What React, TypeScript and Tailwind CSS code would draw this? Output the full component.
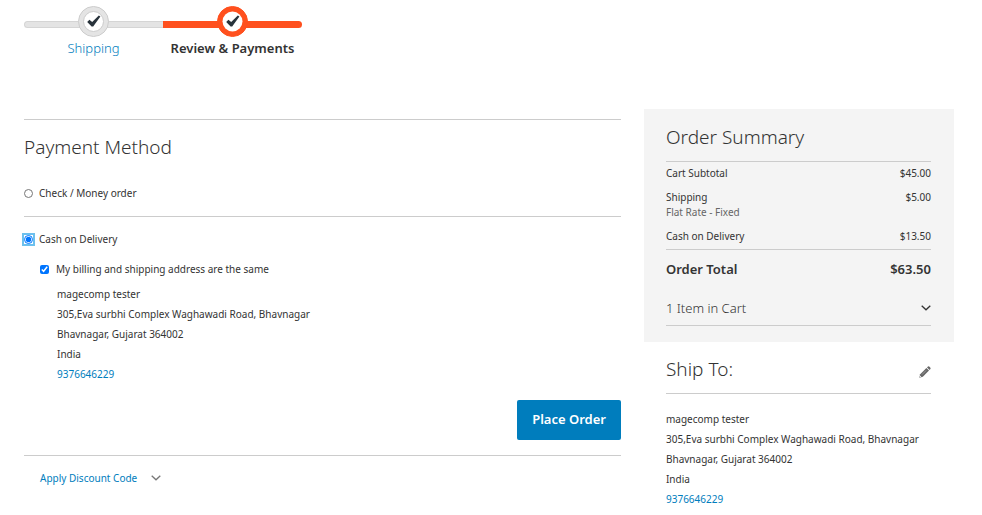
import { useState } from "react";

interface StepProps {
    label: string;
    active?: boolean;
}

interface AddressProps {
    className?: string;
}

const steps: StepProps[] = [
    { label: "Shipping" },
    { label: "Review & Payments", active: true },
];

const addressLines = [
    "magecomp tester",
    "305,Eva surbhi Complex Waghawadi Road, Bhavnagar",
    "Bhavnagar, Gujarat 364002",
    "India",
];

function ChevronIcon({ className }: { className: string }) {
    return (
        <svg viewBox="0 0 10 6" className={className} fill="none" stroke="currentColor" strokeWidth="1.3" aria-hidden="true">
            <path d="M0.7 0.7 L5 4.8 L9.3 0.7" />
        </svg>
    );
}

function Step({ label, active }: StepProps) {
    return (
        <li className="flex w-[139px] flex-col items-center">
            <div className="grid w-full justify-items-center">
                <div
                    className={
                        active
                            ? "col-start-1 row-start-1 mt-[15px] h-[7px] w-full rounded-r-md bg-[#ff501e]"
                            : "col-start-1 row-start-1 mt-[15px] h-[7px] w-full rounded-l-md border border-r-0 border-[#d5d5d5] bg-[#e4e4e4]"
                    }
                />
                <svg viewBox="0 0 31 31" className="col-start-1 row-start-1 size-[31px]" aria-hidden="true">
                    <circle cx="15.5" cy="15.5" r="15" fill={active ? "#ff501e" : "#e4e4e4"} stroke={active ? "#ff501e" : "#ccc"} />
                    <circle cx="15.5" cy="15.5" r="10" fill="#fff" stroke={active ? "#fff" : "#ccc"} strokeWidth={active ? 0 : 1} />
                    <path d="M9.2 15.9 L11.4 13.7 L14.2 15.9 L20.8 9.4 L22.4 10.4 L15.2 20.6 L13.6 20.6 Z" fill="#28333b" />
                </svg>
            </div>
            {active ? (
                <span className="mt-px text-[13px] leading-5 font-semibold text-[#333]">{label}</span>
            ) : (
                <a href="#shipping" className="mt-px text-[13px] leading-5 font-light text-[#007dbd]">{label}</a>
            )}
        </li>
    );
}

function Address({ className }: AddressProps) {
    return (
        <address className={`leading-5 not-italic ${className}`}>
            {addressLines.map((line) => (
                <div key={line}>{line}</div>
            ))}
            <a href="tel:9376646229" className="text-[#007dbd]">9376646229</a>
        </address>
    );
}

function PaymentMethods() {
    const [method, setMethod] = useState("cod");
    const [sameAddress, setSameAddress] = useState(true);

    return (
        <main className="w-2/3 pt-2.5 pr-[23px]">
            <section className="border-t border-[#ccc] pt-[13px]">
                <h2 className="text-[19px] leading-7 font-light">Payment Method</h2>
                <div className="mt-[22px] border-b border-[#ccc] pb-[13px]">
                    <label className="flex h-5 items-center gap-1.5">
                        <input
                            type="radio"
                            name="method"
                            className="size-[9px]"
                            checked={method === "check"}
                            onChange={() => setMethod("check")}
                        />
                        Check / Money order
                    </label>
                </div>
                <div className="border-b border-[#ccc] pt-3 pb-[15px]">
                    <label className="flex h-5 items-center gap-1.5">
                        <input
                            type="radio"
                            name="method"
                            className="size-[9px] rounded-xs outline-2 outline-[#6cc0ee] accent-[#0075ff]"
                            checked={method === "cod"}
                            onChange={() => setMethod("cod")}
                        />
                        Cash on Delivery
                    </label>
                    <label className="mt-2.5 ml-4 flex h-5 items-center gap-[7px]">
                        <input
                            type="checkbox"
                            className="size-[9px] accent-[#0075ff]"
                            checked={sameAddress}
                            onChange={() => setSameAddress(!sameAddress)}
                        />
                        My billing and shipping address are the same
                    </label>
                    <Address className="mt-[5px] ml-[33px]" />
                    <div className="mt-4 flex justify-end">
                        <button type="button" className="h-10 rounded-xs bg-[#007dbd] px-[15px] text-[13px] font-semibold text-white">
                            Place Order
                        </button>
                    </div>
                </div>
                <button type="button" className="mt-3 ml-4 flex h-5 items-center gap-3.5 text-[#007dbd]">
                    Apply Discount Code
                    <ChevronIcon className="h-1.5 w-2.5 text-[#777]" />
                </button>
            </section>
        </main>
    );
}

function OrderSummary() {
    return (
        <aside className="w-1/3">
            <section className="bg-[#f4f4f4] pt-3.5 pr-[23px] pb-4 pl-[22px]">
                <h2 className="border-b border-[#ccc] pb-2.5 text-[19px] leading-7 font-light">Order Summary</h2>
                <table className="w-full leading-[15px]">
                    <tbody>
                        <tr>
                            <th className="pt-1 text-left font-normal">Cart Subtotal</th>
                            <td className="pt-1 text-right">$45.00</td>
                        </tr>
                        <tr>
                            <th className="pt-[9px] text-left font-normal">
                                Shipping
                                <span className="block text-[#666]">Flat Rate - Fixed</span>
                            </th>
                            <td className="pt-[9px] text-right align-top">$5.00</td>
                        </tr>
                        <tr>
                            <th className="border-b border-[#ccc] pt-[9px] pb-[5px] text-left font-normal">Cash on Delivery</th>
                            <td className="border-b border-[#ccc] pt-[9px] pb-[5px] text-right">$13.50</td>
                        </tr>
                        <tr className="text-[13px] leading-5 text-[#333]">
                            <th className="pt-[9px] text-left font-semibold">Order Total</th>
                            <td className="pt-[9px] text-right font-semibold">$63.50</td>
                        </tr>
                    </tbody>
                </table>
                <button
                    type="button"
                    className="mt-[19px] flex w-full items-center justify-between border-b border-[#ccc] pb-[7px] text-[13px] leading-5 font-light"
                >
                    1 Item in Cart
                    <ChevronIcon className="h-1.5 w-2.5" />
                </button>
            </section>
            <section className="pt-[13px] pr-[23px] pl-[22px]">
                <div className="flex items-end justify-between border-b border-[#ccc] pb-2.5">
                    <h2 className="text-[19px] leading-7 font-light">Ship To:</h2>
                    <button type="button" aria-label="Edit" className="pb-[5px]">
                        <svg viewBox="0 0 12 12" className="size-3" fill="#666" aria-hidden="true">
                            <path d="M0.3 11.7 L1.2 8.2 L7.4 2 L10 4.6 L3.8 10.8 Z" />
                            <path d="M8 1.4 L9 0.5 Q9.6 0.1 10.2 0.6 L11.4 1.8 Q11.9 2.4 11.4 3 L10.6 4 Z" />
                            <path d="M3 8.6 L7.2 4.4" stroke="#bbb" strokeWidth="0.6" />
                            <path d="M1.2 9.6 L2.4 10.8 L1 11.1 Z" fill="#fff" />
                        </svg>
                    </button>
                </div>
                <Address className="mt-[15px]" />
            </section>
        </aside>
    );
}

export default function App() {
    return (
        <div className="bg-white pt-1.5 pr-7 pl-6 font-['Noto_Sans','Open_Sans',sans-serif] text-[10px] text-[#333]">
            <ol className="flex">
                {steps.map((step) => (
                    <Step key={step.label} label={step.label} active={step.active} />
                ))}
            </ol>
            <div className="mt-[51px] flex items-start">
                <PaymentMethods />
                <OrderSummary />
            </div>
        </div>
    );
}
